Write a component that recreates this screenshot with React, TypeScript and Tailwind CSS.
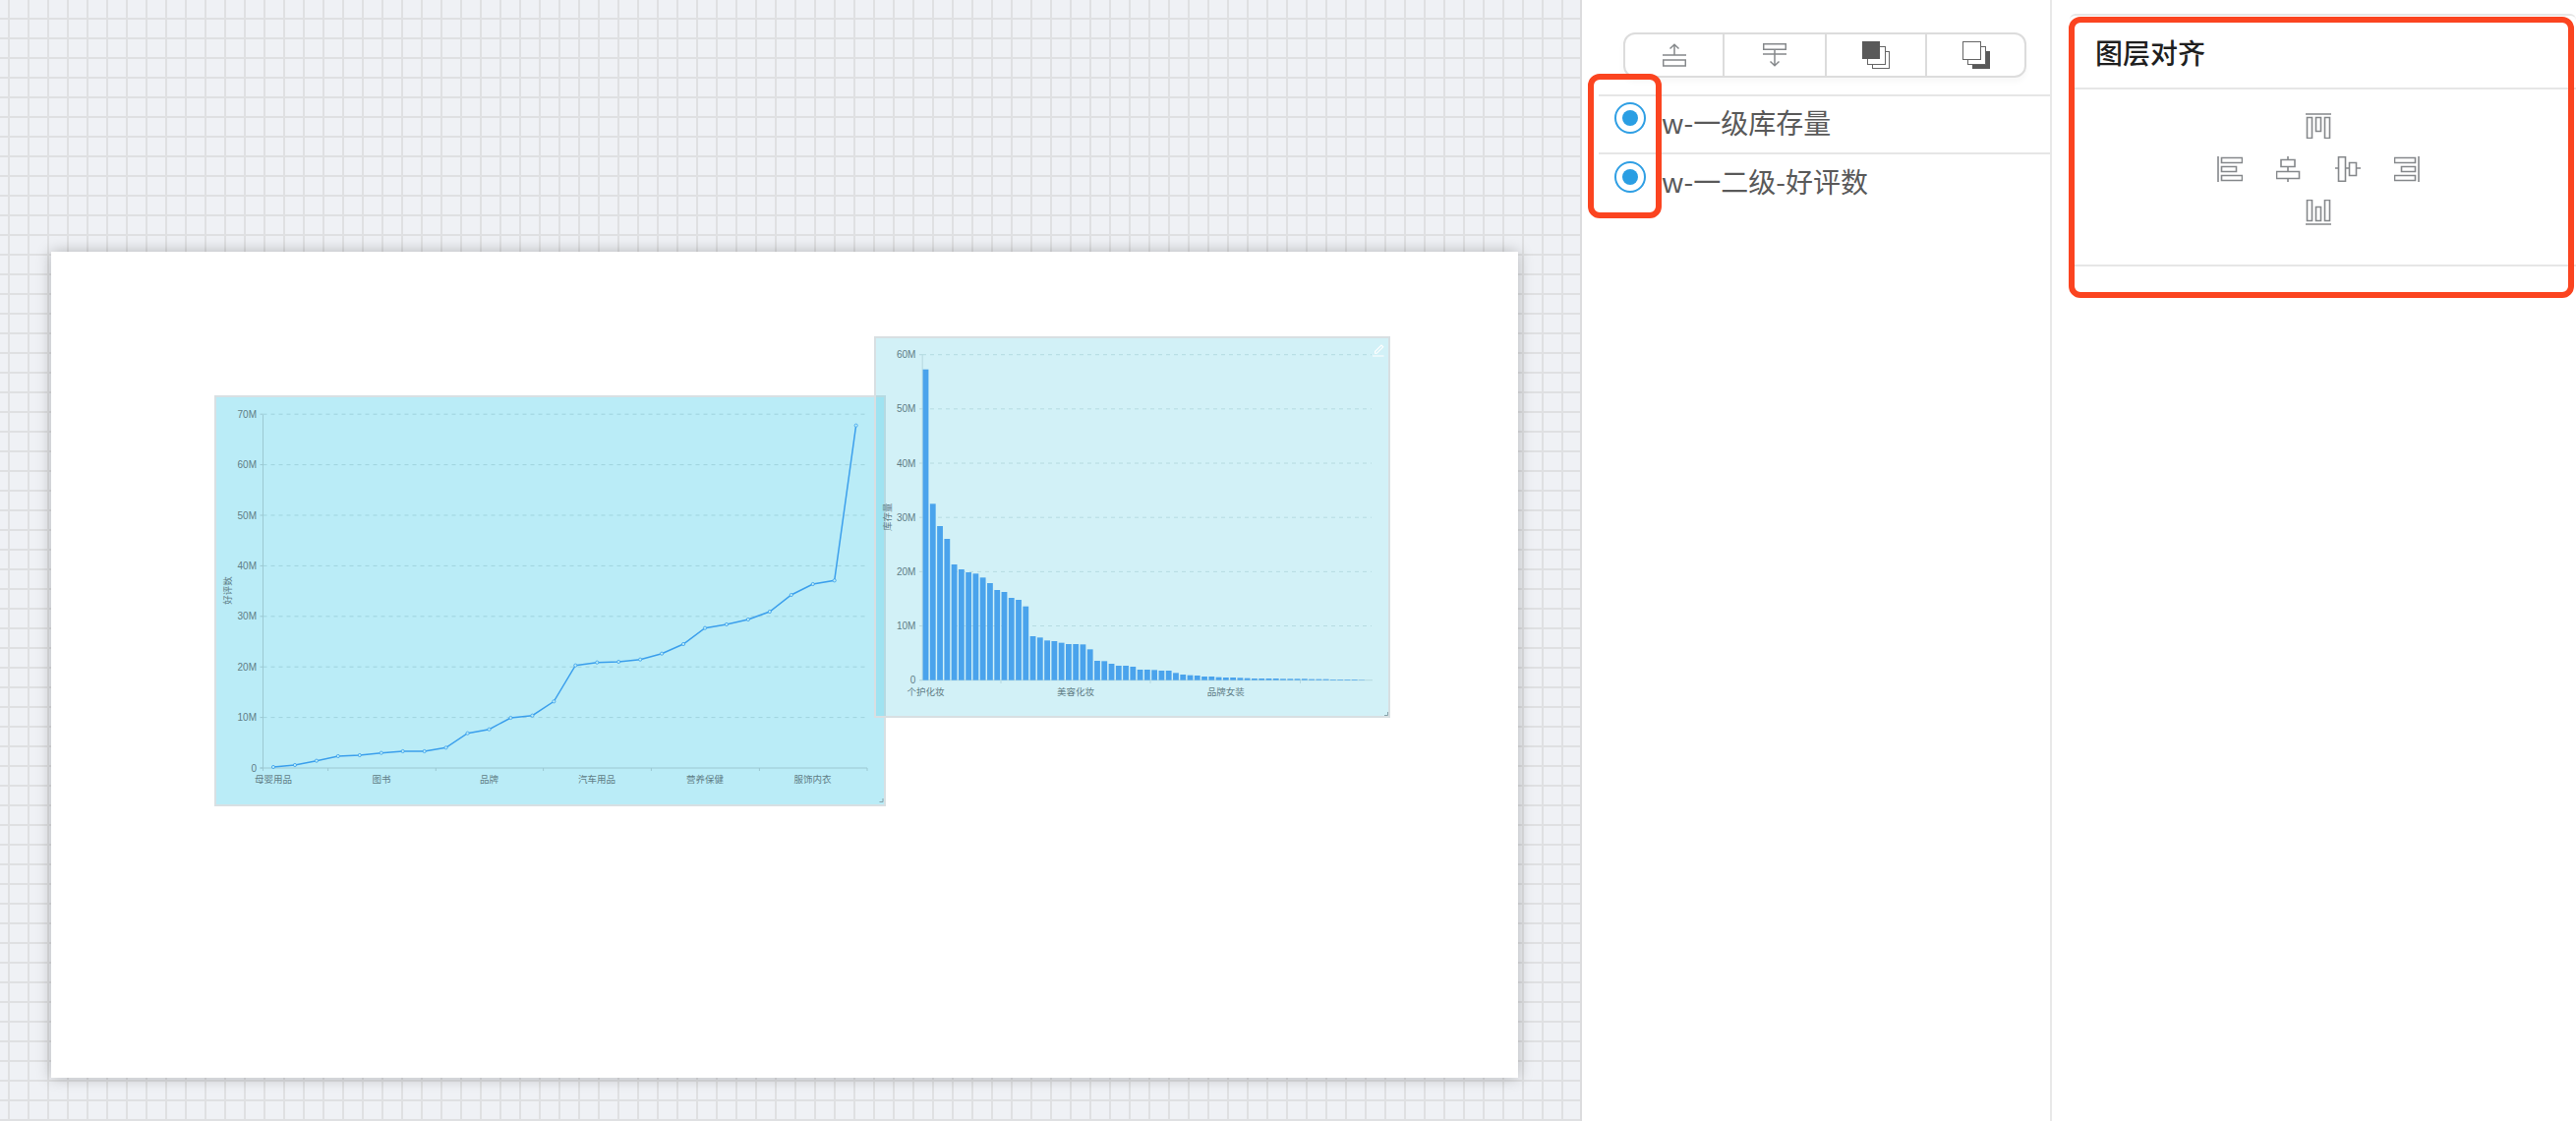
const FONT = "font-['Liberation_Sans','Noto_Sans_CJK_SC',sans-serif]";
const CJK = "font-['Noto_Sans_CJK_SC',sans-serif]";

const lineY = [1200, 1194, 1181, 1167, 1164, 1157, 1152, 1152, 1141, 1097, 1085, 1050, 1043, 1000, 890, 881, 879, 872, 854, 825, 776, 765, 750, 726, 675, 642, 631, 158];
const linePoints = lineY.map((v, i) => ({ x: 278 + i * 21.95, y: 380 + v / 3 }));

const barTops = [137, 547, 615, 654, 732, 747, 756, 760, 772, 789, 810, 816, 834, 840, 860, 951, 955, 964, 966, 971, 975, 975, 976, 991, 1026, 1027, 1035, 1041, 1041, 1044, 1053, 1053, 1054, 1056, 1056, 1063, 1068, 1070, 1071, 1074, 1074, 1076, 1077, 1077, 1078, 1079, 1080, 1080, 1080, 1080, 1081, 1081, 1081, 1081, 1082, 1082, 1082, 1083, 1083, 1083, 1083, 1084];

function LineChart() {
  const ticks = ["0", "10M", "20M", "30M", "40M", "50M", "60M", "70M"];
  const labels: [string, number][] = [["母婴用品", 278], ["图书", 388], ["品牌", 497.5], ["汽车用品", 607], ["营养保健", 717], ["服饰内衣", 826.5]];
  return (
    <div className="absolute left-[166px] top-[146px] h-[418px] w-[683px] border-2 border-[#d8e0e3] bg-[#baecf7]">
      <svg viewBox="218 402 683 418" width={683} height={418} className={`absolute -left-[2px] -top-[2px] ${FONT}`}>
        {ticks.map((t, i) => {
          const y = 781 - i * 51.4;
          return (
            <g key={t}>
              {i > 0 && <line x1={267.5} x2={880} y1={y} y2={y} stroke="#9fd3dd" strokeDasharray="4 4" />}
              <line x1={264.5} x2={267.5} y1={y} y2={y} stroke="#9cc8d2" />
              <text x={261} y={y + 3.5} textAnchor="end" fontSize={10} fill="#5f7d86">{t}</text>
            </g>
          );
        })}
        <line x1={267.5} x2={267.5} y1={421.7} y2={781} stroke="#9cc8d2" />
        <line x1={264.5} x2={882} y1={781} y2={781} stroke="#9cc8d2" />
        {[267.5, 333.6, 443.3, 552.6, 662.4, 772.4, 882].map((x) => (
          <line key={x} x1={x} x2={x} y1={781} y2={784} stroke="#9cc8d2" />
        ))}
        {labels.map(([t, x]) => (
          <text key={t} x={x} y={796} textAnchor="middle" fontSize={9.5} fill="#5f7d86">{t}</text>
        ))}
        <text transform="translate(235 600.6) rotate(-90)" textAnchor="middle" fontSize={9.5} fill="#5f7d86">好评数</text>
        <polyline points={linePoints.map((p) => `${p.x},${p.y}`).join(" ")} fill="none" stroke="#3b9fec" strokeWidth={1.5} />
        {linePoints.map((p) => (
          <circle key={p.x} cx={p.x} cy={p.y} r={1.6} fill="#baecf7" stroke="#3b9fec" strokeWidth={0.8} />
        ))}
        <path d="M898 812v3.5h-3.5" fill="none" stroke="#87a3ab" />
      </svg>
    </div>
  );
}

function BarChart() {
  const ticks = ["0", "10M", "20M", "30M", "40M", "50M", "60M"];
  const labels: [string, number][] = [["个护化妆", 941.4], ["美容化妆", 1094], ["品牌女装", 1246.8]];
  return (
    <div className="absolute left-[837px] top-[86px] h-[388px] w-[525px] border-2 border-[#d8dfe2] bg-[rgba(82,201,224,0.26)]">
      <svg viewBox="889 342 525 388" width={525} height={388} className={`absolute -left-[2px] -top-[2px] ${FONT}`}>
        {ticks.map((t, i) => {
          const y = 691.7 - i * 55.17;
          return (
            <g key={t}>
              {i > 0 && <line x1={938} x2={1395} y1={y} y2={y} stroke="#b5dbe1" strokeDasharray="4 4" />}
              <line x1={935} x2={938} y1={y} y2={y} stroke="#b5d8df" />
              <text x={931.4} y={y + 3.5} textAnchor="end" fontSize={10} fill="#5f7d86">{t}</text>
            </g>
          );
        })}
        <line x1={938.2} x2={938.2} y1={360.7} y2={691.7} stroke="#b5d8df" />
        <line x1={935} x2={1396} y1={691.7} y2={691.7} stroke="#b5d8df" />
        {[1018, 1170, 1322.5].map((x) => (
          <line key={x} x1={x} x2={x} y1={691.7} y2={695} stroke="#b5d8df" />
        ))}
        {labels.map(([t, x]) => (
          <text key={t} x={x} y={706.5} textAnchor="middle" fontSize={9.5} fill="#5f7d86">{t}</text>
        ))}
        <text transform="translate(906 525.7) rotate(-90)" textAnchor="middle" fontSize={9.5} fill="#5f7d86">库存量</text>
        {barTops.map((v, i) => {
          const y = 330 + v / 3;
          return <rect key={i} x={938.6 + i * 7.27} y={y} width={5.8} height={Math.max(691.7 - y, 0.3)} fill="#4aa3ec" />;
        })}
        <path d="M1398.5 357.5l6.5-6.5 1.8 1.8-6.5 6.5h-1.8zM1396 362h11.5" fill="none" stroke="#fff" strokeWidth={1.1} />
        <path d="M1411.5 724v3.5H1408" fill="none" stroke="#87a3ab" />
      </svg>
    </div>
  );
}

function IconToTop() {
  return (
    <svg width={24} height={24} viewBox="0 0 24 24" fill="none" stroke="#85888b" strokeWidth={1.5}>
      <path d="M12 12V1.5M7.5 5.5L12 1.2l4.5 4.3M0 12h24M0.7 17h22.6v6H0.7z" />
    </svg>
  );
}
function IconToBottom() {
  return (
    <svg width={24} height={24} viewBox="0 0 24 24" fill="none" stroke="#85888b" strokeWidth={1.5}>
      <path d="M0.7 0.7h22.6v5.6H0.7zM0 11h24M12 6.3v16.5M7.5 18.5l4.5 4.3 4.5-4.3" />
    </svg>
  );
}
function IconForward() {
  return (
    <svg width={28} height={28} viewBox="0 0 28 28">
      <rect x={10.5} y={10.5} width={17} height={17} fill="#fff" stroke="#666" />
      <rect x={5.5} y={5.5} width={18} height={18} fill="#fff" stroke="#666" />
      <rect x={0} y={0} width={18} height={18} fill="#595959" />
    </svg>
  );
}
function IconBackward() {
  return (
    <svg width={28} height={28} viewBox="0 0 28 28">
      <rect x={10} y={10} width={18} height={18} fill="#595959" />
      <rect x={5.5} y={5.5} width={18} height={18} fill="#fff" stroke="#666" />
      <rect x={0.5} y={0.5} width={18} height={18} fill="#fff" stroke="#666" />
    </svg>
  );
}

function AlignIcon({ d }: { d: string }) {
  return (
    <svg width={26} height={26} viewBox="0 0 26 26" fill="none" stroke="#85888b" strokeWidth={1.6}>
      <path d={d} />
    </svg>
  );
}

function Radio() {
  return (
    <div className="flex h-8 w-8 shrink-0 items-center justify-center rounded-full border-2 border-[#2f9fe4]">
      <div className="h-4 w-4 rounded-full bg-[#2a9ee3]" />
    </div>
  );
}

export default function App() {
  return (
    <div className={`flex h-[1140px] w-[2620px] overflow-hidden bg-white ${FONT}`}>
      <div className="h-full w-[1609px] shrink-0 overflow-hidden border-r-2 border-[#dcdcde] bg-[#eff1f5] bg-[linear-gradient(to_right,#dfe0e2_2px,transparent_2px),linear-gradient(to_bottom,#dfe0e2_2px,transparent_2px)] bg-[size:20px_20px] bg-[position:8px_18px] pl-[52px] pt-[256px]">
        <div className="relative h-[840px] w-[1492px] bg-white shadow-[0_0_14px_rgba(0,0,0,0.25)]">
          <LineChart />
          <BarChart />
        </div>
      </div>

      <div className="relative h-full w-[478px] shrink-0 border-r-2 border-[#e8e8e8] pt-[33px]">
        <div className="ml-[42px] flex h-[46px] w-[410px] rounded-xl border-2 border-[#dcdcdc] shadow-[0_4px_6px_rgba(0,0,0,0.03)]">
          <div className="flex w-[101px] items-center justify-center border-r-2 border-[#dcdcdc]"><IconToTop /></div>
          <div className="flex w-[104px] items-center justify-center border-r-2 border-[#dcdcdc]"><IconToBottom /></div>
          <div className="flex w-[102px] items-center justify-center border-r-2 border-[#dcdcdc]"><IconForward /></div>
          <div className="flex flex-1 items-center justify-center"><IconBackward /></div>
        </div>
        <div className={`ml-[17px] mt-[17px] ${CJK}`}>
          <div className="flex h-[59px] items-start border-t-2 border-[#e6e6e6] pl-[16px] pt-[6px]">
            <Radio />
            <span className="ml-[16px] mt-[4px] text-[28px] leading-8 text-[#595959]">w-一级库存量</span>
          </div>
          <div className="flex h-[60px] items-start border-t-2 border-[#e6e6e6] pl-[16px] pt-[7px]">
            <Radio />
            <span className="ml-[16px] mt-[4px] text-[28px] leading-8 text-[#595959]">w-一二级-好评数</span>
          </div>
        </div>
        <div className="absolute left-[6px] top-[75px] h-[147px] w-[75px] rounded-xl border-[6px] border-[#fb4420]" />
      </div>

      <div className={`relative h-full flex-1 ${CJK}`}>
        <div className="ml-[18px] mt-[14px] w-[515px] rounded-t-md border-t-2 border-[#e6e6e6]">
          <div className="flex h-[75px] items-center border-b-2 border-[#e6e6e6] pl-[26px] pt-[1px] text-[28px] font-medium text-[#1f1f1f]">图层对齐</div>
          <div className="flex h-[180px] flex-col items-center gap-[18px] border-b-2 border-[#e6e6e6] pr-[9px] pt-[24px]">
            <AlignIcon d="M0 1h26M1.5 4.5h5v21h-5zM10.5 4.5h5v14h-5zM19.5 4.5h5v21h-5z" />
            <div className="flex gap-[34px]">
              <AlignIcon d="M1 0v26M4.5 1.5h21v5h-21zM4.5 10.5h15v5h-15zM4.5 19.5h21v5h-21z" />
              <AlignIcon d="M12 0v3.5M5 3.5h14v7H5zM12 10.5v5M0.5 15.5h23v7h-23zM12 22.5V26" />
              <AlignIcon d="M0 12h3.5M3.5 0.7h7v24.6h-7zM10.5 12h4M14.5 6.5h7v13h-7zM21.5 12H26" />
              <AlignIcon d="M25 0v26M0.5 1.5h21v5h-21zM7.5 10.5h14v5h-14zM0.5 19.5h21v5h-21z" />
            </div>
            <AlignIcon d="M0 25h26M1.5 0.5h5v21h-5zM10.5 7.5h5v14h-5zM19.5 0.5h5v21h-5z" />
          </div>
        </div>
        <div className="absolute left-[17px] top-[17px] h-[286px] w-[514px] rounded-xl border-[6px] border-[#fb4420]" />
      </div>
    </div>
  );
}
